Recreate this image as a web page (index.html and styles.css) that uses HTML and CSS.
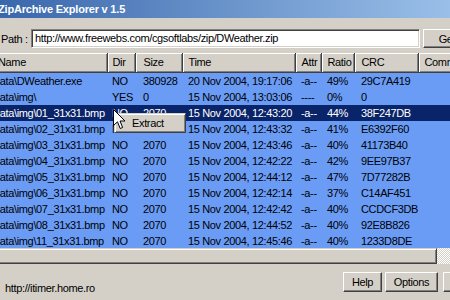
FILE: index.html
```html
<!DOCTYPE html>
<html lang="en">
<head>
    <meta charset="UTF-8">
    <title>ZipArchive Explorer v 1.5</title>
    <link rel="stylesheet" href="styles.css">
</head>
<body>
    <div class="window">
        <div class="titlebar">ZipArchive Explorer v 1.5</div>

        <div class="path-row">
            <span class="path-label">Path :</span>
            <div class="path-input">http://www.freewebs.com/cgsoftlabs/zip/DWeather.zip</div>
            <button class="btn go">Get</button>
        </div>

        <div class="list">
            <table class="files">
                <colgroup>
                    <col class="c-name">
                    <col class="c-dir">
                    <col class="c-size">
                    <col class="c-time">
                    <col class="c-attr">
                    <col class="c-ratio">
                    <col class="c-crc">
                    <col class="c-comm">
                </colgroup>
                <thead>
                    <tr><th>Name</th><th>Dir</th><th>Size</th><th>Time</th><th>Attr</th><th>Ratio</th><th>CRC</th><th>Comment</th></tr>
                </thead>
                <tbody>
                    <tr><td>data\DWeather.exe</td><td>NO</td><td>380928</td><td>20 Nov 2004, 19:17:06</td><td>-a--</td><td>49%</td><td>29C7A419</td><td></td></tr>
                    <tr><td>data\img\</td><td>YES</td><td>0</td><td>15 Nov 2004, 13:03:06</td><td>----</td><td>0%</td><td>0</td><td></td></tr>
                    <tr class="active"><td>data\img\01_31x31.bmp</td><td>NO</td><td>2070</td><td>15 Nov 2004, 12:43:20</td><td>-a--</td><td>44%</td><td>38F247DB</td><td></td></tr>
                    <tr><td>data\img\02_31x31.bmp</td><td>NO</td><td>2070</td><td>15 Nov 2004, 12:43:32</td><td>-a--</td><td>41%</td><td>E6392F60</td><td></td></tr>
                    <tr><td>data\img\03_31x31.bmp</td><td>NO</td><td>2070</td><td>15 Nov 2004, 12:43:46</td><td>-a--</td><td>40%</td><td>41173B40</td><td></td></tr>
                    <tr><td>data\img\04_31x31.bmp</td><td>NO</td><td>2070</td><td>15 Nov 2004, 12:42:22</td><td>-a--</td><td>42%</td><td>9EE97B37</td><td></td></tr>
                    <tr><td>data\img\05_31x31.bmp</td><td>NO</td><td>2070</td><td>15 Nov 2004, 12:44:12</td><td>-a--</td><td>47%</td><td>7D77282B</td><td></td></tr>
                    <tr><td>data\img\06_31x31.bmp</td><td>NO</td><td>2070</td><td>15 Nov 2004, 12:42:14</td><td>-a--</td><td>37%</td><td>C14AF451</td><td></td></tr>
                    <tr><td>data\img\07_31x31.bmp</td><td>NO</td><td>2070</td><td>15 Nov 2004, 12:42:42</td><td>-a--</td><td>40%</td><td>CCDCF3DB</td><td></td></tr>
                    <tr><td>data\img\08_31x31.bmp</td><td>NO</td><td>2070</td><td>15 Nov 2004, 12:44:52</td><td>-a--</td><td>40%</td><td>92E8B826</td><td></td></tr>
                    <tr><td>data\img\11_31x31.bmp</td><td>NO</td><td>2070</td><td>15 Nov 2004, 12:45:46</td><td>-a--</td><td>40%</td><td>1233D8DE</td><td></td></tr>
                </tbody>
            </table>
        </div>

        <div class="hscroll">
            <div class="thumb"></div>
            <div class="track"></div>
        </div>

        <div class="footer">
            <span class="status">http://itimer.home.ro</span>
            <button class="btn help">Help</button>
            <button class="btn options">Options</button>
            <button class="btn close">Close</button>
        </div>

        <!-- right-click menu over the selected row -->
        <div class="context-menu">Extract</div>
        <svg class="cursor" width="13" height="21" viewBox="0 0 13 21">
            <path d="M0.5 0.5 L0.5 16.5 L4.5 12.8 L7.2 19.5 L9.6 18.5 L7 12 L12 12 Z" fill="#fff" stroke="#000" stroke-width="1"/>
        </svg>
    </div>
</body>
</html>
```

FILE: styles.css
```css
* {
    box-sizing: border-box;
}
body {
    margin: 0;
    overflow: hidden;
    background-color: #d4d0c8;
    font-family: "Liberation Sans", Arial, sans-serif;
    font-size: 11px;
    letter-spacing: -0.35px;
    color: #000;
}
.window {
    position: relative;
    margin-left: -6px;
    width: 513px;
    height: 300px;
    background-color: #d4d0c8;
}
.titlebar {
    height: 18px;
    line-height: 18px;
    padding-left: 4px;
    color: white;
    font-weight: bold;
    letter-spacing: -0.2px;
    background: linear-gradient(to right, #3866ab, #a6caf0);
}
.path-row {
    display: flex;
    align-items: center;
    height: 19px;
    margin-top: 11px;
}
.path-label {
    width: 37px;
    padding-left: 7px;
}
.path-input {
    width: 389px;
    height: 19px;
    line-height: 17px;
    padding-left: 3px;
    background-color: white;
    border: 1px solid;
    border-color: #808080 #fff #fff #808080;
    box-shadow: inset 1px 1px #404040, inset -1px -1px #d4d0c8;
    white-space: nowrap;
    overflow: hidden;
}
.btn {
    height: 19px;
    padding: 0;
    font: inherit;
    letter-spacing: inherit;
    color: #000;
    background-color: #d4d0c8;
    border: 1px solid;
    border-color: #fff #404040 #404040 #fff;
    box-shadow: inset -1px -1px #808080;
}
.go {
    width: 48px;
    margin-left: 3px;
}
.list {
    height: 195px;
    margin-top: 5px;
    overflow: hidden;
}
.files {
    margin-left: -6px;
    width: 513px;
    border-collapse: collapse;
    table-layout: fixed;
}
.c-name { width: 119px; }
.c-dir { width: 28px; }
.c-size { width: 47px; }
.c-time { width: 113px; }
.c-attr { width: 26px; }
.c-ratio { width: 33px; }
.c-crc { width: 64px; }
.c-comm { width: 83px; }
.files th {
    height: 19px;
    padding: 0 0 0 6px;
    text-align: left;
    font-weight: normal;
    white-space: nowrap;
    overflow: hidden;
    background-color: #d4d0c8;
    border-right: 1px solid #404040;
    border-bottom: 1px solid #404040;
    box-shadow: inset 1px 1px #fff, inset -1px -1px #808080;
}
.files th:first-child {
    padding-left: 10px;
}
.files td {
    height: 16px;
    line-height: 16px;
    padding: 0 0 0 6px;
    white-space: nowrap;
    overflow: hidden;
    background-color: #6a9cf6;
}
.files td:nth-child(2),
.files th:nth-child(2) {
    padding-left: 5px;
}
.files td:nth-child(3),
.files th:nth-child(3) {
    padding-left: 8px;
}
.files td:nth-child(7),
.files th:nth-child(7) {
    padding-left: 7px;
}
.files tr.active td {
    background-color: #0a246a;
    color: white;
}
.hscroll {
    display: flex;
    height: 16px;
}
.thumb {
    width: 443px;
    border: 1px solid;
    border-color: #d4d0c8 #404040 #404040 #d4d0c8;
    box-shadow: inset 1px 1px #fff, inset -1px -1px #808080;
}
.track {
    flex: 1;
    background: repeating-conic-gradient(#fff 0 25%, #d4d0c8 0 50%) 0 0 / 2px 2px;
}
.footer {
    display: flex;
    padding: 8px 4px 0 0;
}
.status {
    flex: 1;
    padding: 10px 0 0 11px;
    line-height: 12px;
}
.footer .btn {
    height: 20px;
}
.help {
    width: 39px;
}
.options {
    width: 53px;
    margin-left: 3px;
}
.close {
    width: 60px;
    margin-left: 5px;
}
.context-menu {
    position: absolute;
    left: 120px;
    top: 113px;
    width: 72px;
    height: 20px;
    line-height: 18px;
    padding-left: 17px;
    background-color: #d4d0c8;
    border: 1px solid;
    border-color: #d4d0c8 #404040 #404040 #d4d0c8;
    box-shadow: inset 1px 1px #fff, inset -1px -1px #808080;
}
.cursor {
    position: absolute;
    left: 119px;
    top: 109px;
}
```
